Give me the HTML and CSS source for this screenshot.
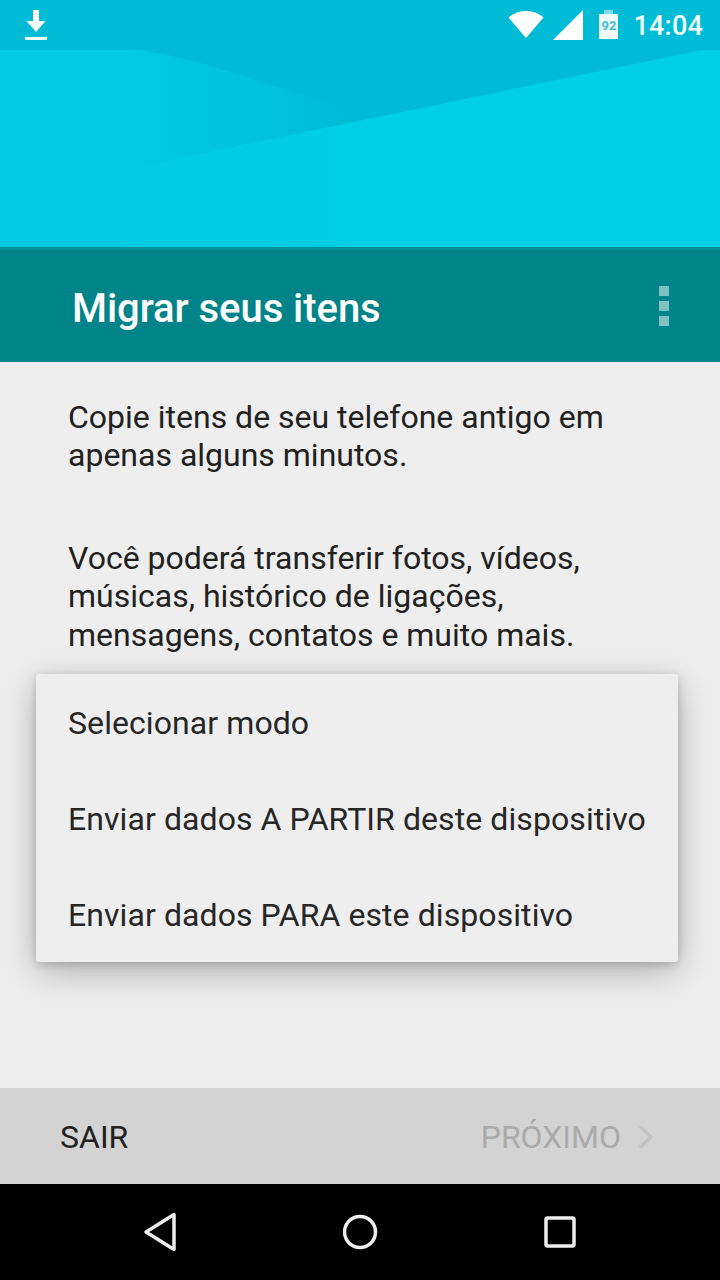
FILE: index.html
```html
<!DOCTYPE html>
<html lang="pt">
<head>
<meta charset="utf-8">
<title>Migrar seus itens</title>
<link rel="stylesheet" href="styles.css">
</head>
<body>
<div class="screen">
  <header class="hero">
    <svg class="hero-bg" width="720" height="247" viewBox="0 0 720 247" aria-hidden="true">
      <defs>
        <linearGradient id="left" gradientUnits="userSpaceOnUse" x1="120" y1="0" x2="350" y2="0">
          <stop offset="0" stop-color="#00cbe3"/>
          <stop offset="1" stop-color="#00bbd6"/>
        </linearGradient>
        <linearGradient id="right" gradientUnits="userSpaceOnUse" x1="120" y1="0" x2="420" y2="0">
          <stop offset="0" stop-color="#00cbe3"/>
          <stop offset="1" stop-color="#00cfe6"/>
        </linearGradient>
      </defs>
      <path d="M0 50H138C170 54 205 64 243 76L350 110V247H0Z" fill="url(#left)"/>
      <path d="M720 50H702L184 157L100 175V247H720Z" fill="url(#right)"/>
    </svg>
    <div class="status">
      <svg class="ic-download" width="22" height="30" viewBox="0 0 22 30"><path d="M8 0h6v11h6.500L11 22 1.500 11H8z" fill="#fff"/><rect y="27" width="22" height="3" fill="#f0ffff"/></svg>
      <div class="status-right">
        <svg class="ic-wifi" width="36" height="30" viewBox="0 0 36 30"><path d="M18 28L0.500 7.500C5 3.500 11 1 18 1s13 2.500 17.500 6.500z" fill="#fff"/></svg>
        <svg class="ic-signal" width="30" height="30" viewBox="0 0 30 30"><path d="M30 0V30H0z" fill="#fff"/></svg>
        <div class="battery"><span class="battery-cap"></span><span class="battery-body">92</span></div>
        <span class="clock">14:04</span>
      </div>
    </div>
  </header>
  <div class="appbar">
    <h1 class="title">Migrar seus itens</h1>
    <div class="more"><i></i><i></i><i></i></div>
  </div>
  <main class="content">
    <p class="para">Copie itens de seu telefone antigo em apenas alguns minutos.</p>
    <p class="para">Você poderá transferir fotos, vídeos, músicas, histórico de ligações, mensagens, contatos e muito mais.</p>
    <div class="menu">
      <div class="menu-item">Selecionar modo</div>
      <div class="menu-item">Enviar dados A PARTIR deste dispositivo</div>
      <div class="menu-item">Enviar dados PARA este dispositivo</div>
    </div>
  </main>
  <div class="actions">
    <span class="btn">SAIR</span>
    <span class="btn btn-off">PRÓXIMO
      <svg width="16" height="24" viewBox="0 0 16 24"><path d="M2 1.500L13 12 2 22.500" fill="none" stroke="#c2c2c2" stroke-width="3.500"/></svg>
    </span>
  </div>
  <nav class="navbar">
    <svg width="36" height="40" viewBox="0 0 36 40"><path d="M31 2.500V37.500L3 20z" fill="none" stroke="#eee" stroke-width="3.500" stroke-linejoin="round"/></svg>
    <svg width="36" height="36" viewBox="0 0 36 36"><circle cx="17" cy="18" r="15.500" fill="none" stroke="#eee" stroke-width="3.500"/></svg>
    <svg width="34" height="34" viewBox="0 0 34 34"><rect x="3" y="3" width="28" height="28" rx="1.500" fill="none" stroke="#eee" stroke-width="3.500"/></svg>
  </nav>
</div>
</body>
</html>
```

FILE: styles.css
```css
* { box-sizing: border-box; }
html, body { margin: 0; padding: 0; }
body { background: #eee; font-family: Roboto, "Liberation Sans", sans-serif; }
.screen { width: 720px; height: 1280px; display: flex; flex-direction: column; overflow: hidden; position: relative; }

.hero { height: 247px; background: #00bbd6; position: relative; flex: none; }
.hero-bg { position: absolute; left: 0; top: 0; display: block; }
.status { position: relative; height: 50px; display: flex; justify-content: space-between; align-items: flex-start; padding: 10px 17px 0 25px; }
.ic-download { display: block; }
.status-right { display: flex; align-items: flex-start; }
.status-right svg { display: block; }
.ic-signal { margin-left: 9px; }
.battery { margin-left: 16px; width: 19px; display: flex; flex-direction: column; align-items: center; }
.battery-cap { width: 9px; height: 4px; background: #7fdcea; }
.battery-body { width: 19px; height: 25px; background: #f2fdfe; color: #3fc0d8; font-size: 13px; font-weight: 700; line-height: 24px; text-align: center; }
.clock { margin: -2px 0 0 15px; color: #f2fdfe; font-size: 27px; font-weight: 500; line-height: 36px; letter-spacing: 0.2px; }

.appbar { height: 115px; flex: none; background: #008489; border-top: 3px solid #03909a; display: flex; align-items: center; justify-content: space-between; padding: 0 51px 0 72px; }
.title { margin: 6px 0 0; color: #fff; font-size: 40px; font-weight: 500; line-height: 48px; letter-spacing: -0.05px; }
.more { display: flex; flex-direction: column; gap: 5px; }
.more i { display: block; width: 10px; height: 10px; background: #80c2c4; }

.content { flex: 1; background: #eee; padding: 36px 68px 0; position: relative; }
.para { margin: 0 0 64px; color: #212121; font-size: 32px; line-height: 38.400px; }
.menu { position: absolute; left: 36px; top: 312px; width: 642px; height: 288px; background: #eee; border-radius: 3px; box-shadow: 0 10px 36px rgba(0,0,0,.26), 0 2px 10px rgba(0,0,0,.18); }
.menu-item { height: 96px; padding: 2px 0 0 32px; display: flex; align-items: center; color: #262626; font-size: 32px; letter-spacing: 0.08px; }

.actions { height: 96px; flex: none; background: #d3d3d3; display: flex; align-items: center; justify-content: space-between; padding: 2px 66px 0 60px; }
.btn { color: #212121; font-size: 32px; display: flex; align-items: center; }
.btn-off { color: #aaa; gap: 17px; }
.btn-off svg { display: block; }

.navbar { height: 96px; flex: none; background: #000; display: flex; align-items: center; justify-content: space-between; padding: 0 143px; }
.navbar svg { display: block; }
```
